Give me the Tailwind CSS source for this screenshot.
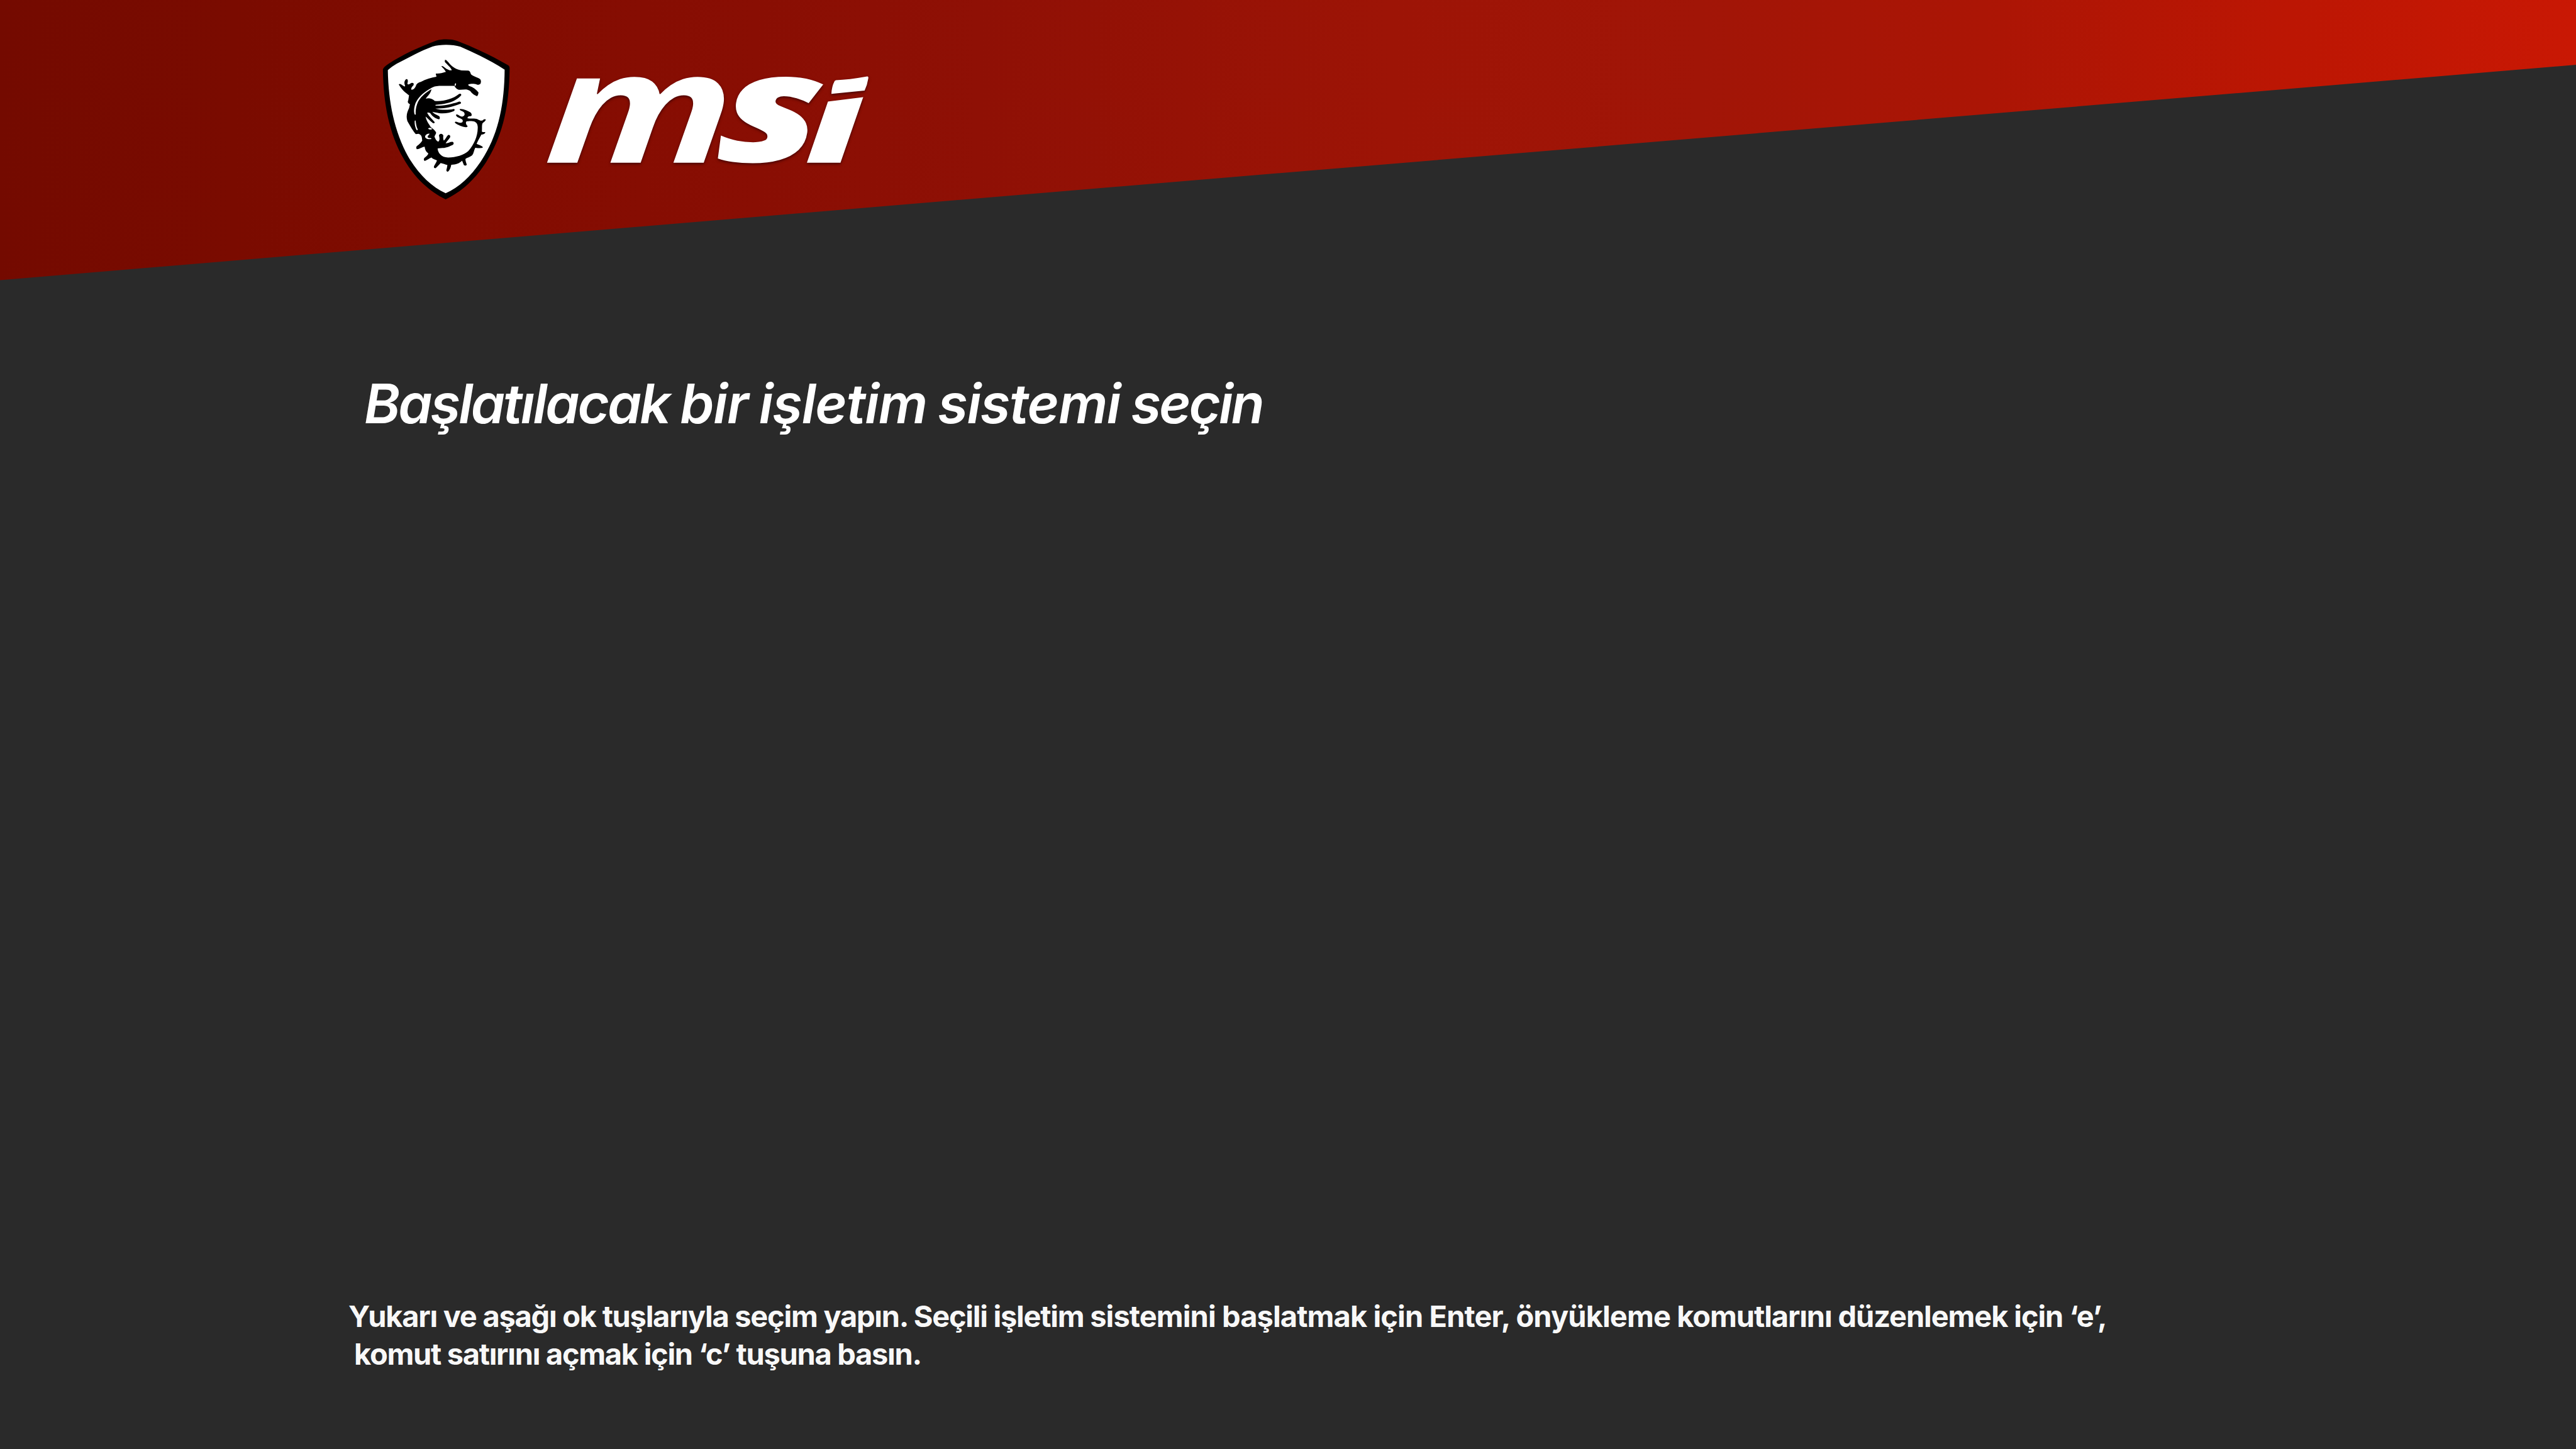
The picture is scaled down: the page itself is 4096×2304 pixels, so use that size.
<!DOCTYPE html>
<html lang="tr">
<head>
<meta charset="utf-8">
<title>MSI</title>
<script src="https://cdn.jsdelivr.net/npm/@tailwindcss/browser@4"></script>
</head>
<body class="bg-[#2a2a2a]">
<div class="flex h-[2304px] w-[4096px] flex-col overflow-hidden bg-[#2a2a2a] font-['Inter',sans-serif] text-white">

  <header class="flex h-[446px] shrink-0 items-start bg-[linear-gradient(to_right,#740a00_0%,#7a0b00_9%,#860d02_25%,#8f1005_38%,#9d1406_54%,#a11507_66%,#ab1505_77%,#bc1603_89%,#c91804_100%)] pl-[597px] [clip-path:polygon(0_0,100%_0,100%_103px,0_445.4px)]">
    <!-- dragon shield -->
    <svg class="mt-[53px] h-[277px] w-[224px] shrink-0" viewBox="0 0 1260 1560">
      <path d="M628 1487C480 1415 345 1290 250 1120C125 900 70 640 66 322C72 305 90 290 112 276C250 185 400 120 545 65C600 50 680 50 730 68C890 130 1050 205 1180 282C1195 290 1201 298 1201 312C1197 640 1145 890 1010 1120C905 1300 775 1415 628 1487Z" fill="#000"/>
      <path d="M628 1432C500 1375 380 1255 290 1100C170 880 115 620 110 330C130 310 160 290 190 272C300 215 410 155 510 118C580 97 690 97 760 120C900 180 1040 250 1156 325C1154 620 1105 880 975 1095C885 1250 760 1375 628 1432Z" fill="#fff"/>
      <path d="M622 236C635 236 650 255 665 275C690 303 725 325 770 332L830 333C845 335 850 350 855 368C870 382 900 392 925 402C945 412 948 430 940 450C930 462 915 462 905 457C885 450 850 450 832 458C828 463 832 468 840 472C870 480 900 500 922 530C920 545 917 560 908 563C890 555 870 545 858 530C850 515 835 508 820 504C795 500 770 508 745 505C725 500 715 485 705 470L570 470C540 472 515 478 498 490L500 505C490 545 465 560 450 585C475 578 505 582 530 605C600 612 690 590 745 545C760 535 772 545 766 556C735 590 690 615 640 625C610 635 570 636 537 640L537 648C600 650 680 635 745 612C762 608 770 620 762 630C720 650 640 670 590 672L535 674C580 685 640 690 700 677C712 678 710 690 703 695C670 712 620 720 570 715C545 712 520 705 508 703C520 720 545 730 570 742C580 752 575 768 568 770C540 765 510 745 490 715C480 708 470 708 462 712C480 745 510 770 530 795C528 805 520 808 512 803C490 785 465 760 448 745C455 785 480 815 495 840C515 855 535 870 543 890C540 905 530 915 528 925C535 945 545 965 562 970C575 960 575 940 568 915C572 895 600 895 607 915C605 935 605 950 612 960C625 950 635 925 648 912C662 905 672 915 668 930C655 950 635 970 628 985C650 985 670 970 690 972C705 980 700 995 690 1000C665 1012 630 1028 600 1027L556 1030C558 1070 590 1110 650 1112C720 1112 790 1090 830 1055C880 1000 915 920 915 850C918 810 900 790 870 787C840 785 830 788 815 788C805 795 808 815 825 832C820 842 805 842 790 838C760 830 725 815 710 800C712 788 722 790 735 795C755 802 765 803 778 795C785 780 780 772 765 765C740 755 720 745 720 730C730 720 745 735 760 742C780 750 790 745 797 730C800 710 790 703 775 697C760 692 750 685 755 678C785 675 830 695 855 712C865 730 862 740 850 742C835 740 825 745 823 760C850 768 890 758 915 770C935 780 945 785 958 780C968 770 980 765 988 773C985 785 970 795 958 805C950 825 955 850 952 880C960 888 975 880 984 887C980 900 965 905 948 907C930 940 915 965 905 990C925 998 950 1005 962 1020C955 1032 925 1028 893 1025C880 1050 880 1075 865 1092C845 1108 820 1112 805 1125C805 1145 812 1160 817 1175C812 1187 797 1187 791 1180C785 1165 780 1150 775 1140C750 1165 720 1175 678 1177C675 1200 665 1225 650 1238C638 1240 633 1232 635 1220C640 1205 642 1190 643 1178C625 1178 605 1165 583 1162C570 1175 555 1195 537 1208C522 1208 520 1198 525 1187C535 1170 545 1155 550 1138C530 1128 510 1125 502 1112C485 1115 465 1135 440 1143C430 1135 430 1125 438 1115C455 1100 470 1090 473 1075C450 1060 443 1040 440 1015C420 1015 400 1035 370 1037C362 1030 362 1018 370 1010C390 995 410 975 418 960C415 930 415 910 385 900L360 902C340 880 310 830 285 785C270 740 285 700 300 670L308 635C285 625 287 610 293 600L300 555C280 540 240 515 208 458C215 447 230 455 240 465C255 475 262 480 265 470C255 450 255 425 275 410C290 408 293 425 285 450C290 465 305 455 320 445C340 440 345 450 340 465C325 480 315 495 322 505C345 505 360 480 365 460C375 445 390 438 405 435C450 410 500 395 545 388C545 375 538 368 540 360C570 362 600 355 630 345C620 325 600 305 590 295C600 285 615 305 635 318C650 325 665 335 683 330C675 305 640 280 620 255Z" fill="#000"/>
      <g fill="#fff">
        <path d="M502 488C440 520 385 565 358 625C342 670 342 710 352 728L360 728C358 700 360 665 372 635C392 575 450 530 502 500Z"/>
        <path d="M351 782C348 810 355 845 368 866C374 870 380 866 376 856C366 838 362 812 359 782Z"/>
        <path d="M712 474C706 466 710 448 717 446C724 450 722 460 712 474Z"/>
        <path d="M470 853C480 842 500 845 508 858C500 862 485 865 470 853Z"/>
        <path d="M484 899C460 895 440 915 445 932C455 948 480 950 500 946C502 940 495 936 482 938C468 936 464 930 468 920C472 912 480 908 484 899Z"/>
      </g>
    </svg>

    <!-- wordmark -->
    <svg class="mt-[96px] ml-[32px] h-[192px] w-[555px] shrink-0 overflow-visible drop-shadow-[0_2px_2px_rgba(40,0,0,0.7)]" viewBox="1600 180 1040 360" fill="#fff" font-family="'Open Sans','Noto Sans',sans-serif" font-size="100" font-weight="800" font-style="italic">
      <clipPath id="stem"><path d="M2370 520V315L2468 303L2570 290L2650 280V520Z"/></clipPath>
      <text font-weight="700" transform="matrix(6.15 0 -.33 4.6 1620 485)">m</text>
      <text transform="matrix(6.1 0 -.6 4.5 2130 482)">s</text>
      <g clip-path="url(#stem)"><text transform="matrix(5.3 0 -.26 4 2400 485)">i</text></g>
      <path d="M2493 239Q2530 238 2586 228Q2590 228 2589 234Q2586 254 2578 270L2479 280Q2480 258 2488 243Q2489 240 2493 239Z"/>
    </svg>
  </header>

  <main class="flex grow flex-col justify-between">
    <h1 class="mt-[152px] ml-[579px] text-[87px] leading-none font-semibold tracking-[-2.5px] whitespace-nowrap italic [word-spacing:-2px]"><span class="tracking-[-3.1px]">Başlatılacak</span> <span class="tracking-[-1.2px]">bir</span> <span class="tracking-[-1.3px]">işletim</span> <span class="tracking-[-1.5px]">sistemi</span> <span class="tracking-[-3.3px]">seçin</span></h1>

    <footer class="mb-[121px] ml-[554px] text-[47px] leading-[60px] font-bold tracking-[-1.13px] whitespace-nowrap text-[#f8f8f8]">
      <p><span class="tracking-[-1.27px]">Yukarı ve aşağı ok tuşlarıyla seçim yapın. Seçili işletim </span><span class="tracking-[-0.9px]">sistemini başlatmak için Enter, önyükleme </span>komutlarını düzenlemek için ‘e’,</p>
      <p class="pl-[9px] tracking-[-1.3px]">komut satırını açmak için ‘c’ tuşuna basın.</p>
    </footer>
  </main>
</div>
</body>
</html>
